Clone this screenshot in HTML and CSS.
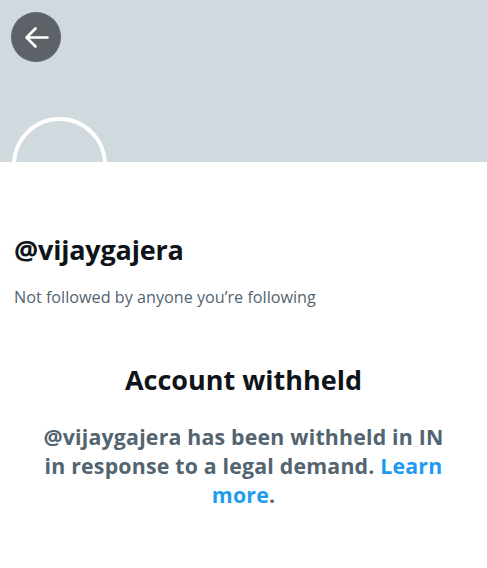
FILE: index.html
```html
<!DOCTYPE html>
<html>
<head>
<meta charset="utf-8">
<link rel="stylesheet" href="styles.css">
</head>
<body>
<div class="page">
  <header class="banner">
    <button class="back" aria-label="Back">
      <svg viewBox="0 0 50 50" width="50" height="50"><path d="M15.5 25.5H36.5M24.5 16.5L15.5 25.5L24.5 34.5" fill="none" stroke="#fff" stroke-width="2.6" stroke-linecap="round" stroke-linejoin="round"/></svg>
    </button>
    <div class="avatar"></div>
  </header>
  <section class="profile">
    <h1 class="handle">@vijaygajera</h1>
    <p class="followers">Not followed by anyone you’re following</p>
  </section>
  <section class="notice">
    <h2 class="title">Account withheld</h2>
    <p class="desc">@vijaygajera has been withheld in IN in response to a legal demand. <a href="#" class="link">Learn</a> <a href="#" class="link">more</a>.</p>
  </section>
</div>
</body>
</html>
```
FILE: styles.css
```css
html, body { margin: 0; padding: 0; background: #fff; }
body { font-family: "Open Sans", "Noto Sans", sans-serif; color: #0f1419; }
.page { width: 487px; height: 568px; overflow: hidden; }
.banner { position: relative; height: 162px; background: #cfd9de; overflow: hidden; }
.back {
  position: absolute; left: 11px; top: 12px;
  width: 50px; height: 50px; border-radius: 50%;
  background: #5c6267; border: 0; padding: 0;
  display: flex; align-items: center; justify-content: center;
}
.avatar {
  position: absolute; left: 12px; top: 117px;
  width: 87px; height: 87px; border-radius: 50%;
  border: 4px solid #fff; background: #cfd9de;
}
.profile { padding: 72px 14px 0; }
.handle { margin: 0; font-size: 27px; font-weight: 700; line-height: 32px; letter-spacing: -0.2px; }
.followers { margin: 21px 0 0; font-size: 16.2px; line-height: 20px; color: #536471; }
.notice { text-align: center; padding: 56px 36px 0; }
.title { margin: 0; font-size: 27px; font-weight: 700; line-height: 34px; }
.desc { margin: 25px 0 0; font-size: 21.3px; letter-spacing: 0.2px; font-weight: 700; line-height: 29.2px; color: #536471; }
.link { color: #1d9bf0; text-decoration: none; }
```
